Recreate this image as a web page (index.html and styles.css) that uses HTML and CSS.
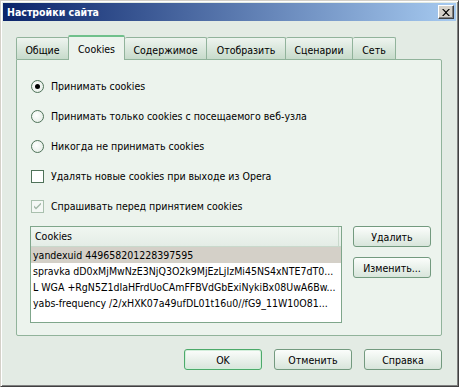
FILE: index.html
```html
<!DOCTYPE html>
<html>
<head>
  <meta charset="utf-8">
  <title>Настройки сайта</title>
  <link rel="stylesheet" href="styles.css">
</head>
<body>
  <div class="window">
    <div class="titlebar">
      <span class="title">Настройки сайта</span>
      <button class="close-btn" aria-label="Закрыть">
        <svg viewBox="0 0 8 7" width="8" height="7">
          <path d="M0 0 L1.5 0 L4 2.5 L6.5 0 L8 0 L4.75 3.5 L8 7 L6.5 7 L4 4.5 L1.5 7 L0 7 L3.25 3.5 Z" fill="#000"/>
        </svg>
      </button>
    </div>

    <div class="tabs">
      <div class="tab tab-general">Общие</div>
      <div class="tab tab-cookies active">Cookies</div>
      <div class="tab tab-content">Содержимое</div>
      <div class="tab tab-display">Отобразить</div>
      <div class="tab tab-scripts">Сценарии</div>
      <div class="tab tab-network">Сеть</div>
    </div>

    <div class="panel">
      <!-- Cookie policy -->
      <div class="options">
        <label class="option">
          <span class="radio checked"></span>
          <span>Принимать cookies</span>
        </label>
        <label class="option">
          <span class="radio"></span>
          <span>Принимать только cookies с посещаемого веб-узла</span>
        </label>
        <label class="option">
          <span class="radio"></span>
          <span>Никогда не принимать cookies</span>
        </label>
        <label class="option">
          <span class="checkbox"></span>
          <span>Удалять новые cookies при выходе из Opera</span>
        </label>
        <label class="option">
          <span class="checkbox disabled">
            <svg viewBox="0 0 7 7" width="7" height="7">
              <path d="M0 2.5 L0 4.5 L2 6.5 L7 1.5 L7 -0.5 L2 4.5 Z" fill="#a3b8a8"/>
            </svg>
          </span>
          <span>Спрашивать перед принятием cookies</span>
        </label>
      </div>

      <!-- Cookie list -->
      <div class="cookie-area">
        <div class="cookie-list">
          <div class="list-header">
            <div class="header-cell">Cookies</div>
          </div>
          <div class="list-row selected">yandexuid 449658201228397595</div>
          <div class="list-row">spravka dD0xMjMwNzE3NjQ3O2k9MjEzLjIzMi45NS4xNTE7dT0...</div>
          <div class="list-row">L WGA +RgN5Z1dIaHFrdUoCAmFFBVdGbExiNykiBx08UwA6Bw...</div>
          <div class="list-row">yabs-frequency /2/xHXK07a49ufDL01t16u0//fG9_11W10O81...</div>
        </div>
        <div class="side-buttons">
          <button class="btn">Удалить</button>
          <button class="btn">Изменить...</button>
        </div>
      </div>
    </div>

    <div class="footer">
      <button class="btn default">OK</button>
      <button class="btn">Отменить</button>
      <button class="btn">Справка</button>
    </div>
  </div>
</body>
</html>
```

FILE: styles.css
```css
body {
  margin: 0;
  padding: 0;
  background: #e3ebe4;
  overflow: hidden;
}

.window {
  box-sizing: border-box;
  width: 459px;
  height: 387px;
  padding: 2px;
  border: 1px solid;
  border-color: #d4d0c8 #404040 #404040 #d4d0c8;
  box-shadow: inset 1px 1px #ffffff, inset -1px -1px #808080;
  background: #e3ebe4;
  font-family: "DejaVu Sans", sans-serif;
  font-stretch: condensed;
  font-size: 10.5px;
  color: #000;
}

/* Title bar */
.titlebar {
  display: flex;
  align-items: center;
  justify-content: space-between;
  height: 18px;
  padding: 0 2px 0 4px;
  background: linear-gradient(to right, #0a246a, #a6caf0);
}

.title {
  color: #ffffff;
  font-weight: bold;
  font-size: 10.5px;
}

.close-btn {
  display: flex;
  align-items: center;
  justify-content: center;
  box-sizing: border-box;
  width: 16px;
  height: 14px;
  padding: 0;
  border: 1px solid;
  border-color: #ffffff #404040 #404040 #ffffff;
  box-shadow: inset -1px -1px #808080;
  background: #d4d0c8;
}

/* Tabs */
.tabs {
  display: flex;
  align-items: flex-end;
  height: 24px;
  margin-top: 14px;
  padding-left: 13px;
}

.tab {
  box-sizing: border-box;
  height: 22px;
  display: flex;
  align-items: center;
  justify-content: center;
  border: 1px solid #91b39b;
  border-bottom: none;
  border-left: none;
  border-radius: 2px 2px 0 0;
  background: linear-gradient(#eef4ef, #c7dbcb);
  padding-top: 2px;
}

.tab:first-child {
  border-left: 1px solid #91b39b;
}

.tab.active {
  height: 25px;
  margin-bottom: -1px;
  position: relative;
  z-index: 1;
  border-left: 1px solid #91b39b;
  border-top: 2px solid #6fc08b;
  background: #ecf3ed;
  padding-top: 0;
}

.tab-general { width: 53px; }
.tab-cookies { width: 57px; margin-left: -1px; }
.tab-content { width: 82px; }
.tab-display { width: 79px; }
.tab-scripts { width: 67px; }
.tab-network { width: 43px; }

/* Panel */
.panel {
  box-sizing: border-box;
  height: 277px;
  margin: 0 14px 0 13px;
  padding: 18px 0 0 13px;
  border: 1px solid #91b39b;
  border-radius: 0 2px 2px 2px;
  background: #ecf3ed;
}

.options {
  display: flex;
  flex-direction: column;
  gap: 14px;
}

.option {
  display: flex;
  align-items: center;
  gap: 7px;
  height: 16px;
  padding-left: 1px;
}

.radio {
  box-sizing: border-box;
  width: 13px;
  height: 13px;
  border: 1px solid #4f7259;
  border-radius: 50%;
  background: radial-gradient(circle at 40% 40%, #ffffff, #dfe9e1);
  display: flex;
  align-items: center;
  justify-content: center;
}

.radio.checked::after {
  content: "";
  width: 5px;
  height: 5px;
  border-radius: 50%;
  background: #000;
}

.checkbox {
  box-sizing: border-box;
  width: 13px;
  height: 13px;
  border: 1px solid #4f7259;
  background: #ffffff;
  display: flex;
  align-items: center;
  justify-content: center;
}

.checkbox.disabled {
  border-color: #a9c0ae;
  background: #f4f8f5;
}

/* Cookie list */
.cookie-area {
  display: flex;
  align-items: flex-start;
  margin-top: 12px;
}

.cookie-list {
  box-sizing: border-box;
  width: 312px;
  height: 97px;
  border: 1px solid #7fa68b;
  background: #ffffff;
  overflow: hidden;
}

.list-header {
  height: 19px;
  display: flex;
  border-bottom: 1px solid #c9d9cc;
  background: linear-gradient(#f0f6f1, #e4ede6);
}

.header-cell {
  box-sizing: border-box;
  width: 308px;
  padding: 3px 0 0 4px;
  border-right: 1px solid #c9d9cc;
}

.list-row {
  height: 16px;
  line-height: 16px;
  padding-left: 2px;
  white-space: nowrap;
  overflow: hidden;
}

.list-row.selected {
  background: #d4d0c8;
}

.side-buttons {
  display: flex;
  flex-direction: column;
  gap: 10px;
  margin-left: 11px;
}

/* Buttons */
.btn {
  box-sizing: border-box;
  width: 78px;
  height: 21px;
  padding: 0;
  border: 1px solid #739a7f;
  border-radius: 3px;
  background: linear-gradient(#fbfdfb, #d8e5db);
  font-family: inherit;
  font-stretch: inherit;
  font-size: 10.5px;
  color: #000;
}

.btn.default {
  border-color: #4caa6a;
  box-shadow: inset 0 0 0 1px #d3eedb;
}

.footer {
  display: flex;
  justify-content: flex-end;
  gap: 12px;
  margin: 13px 14px 0 0;
}
```
